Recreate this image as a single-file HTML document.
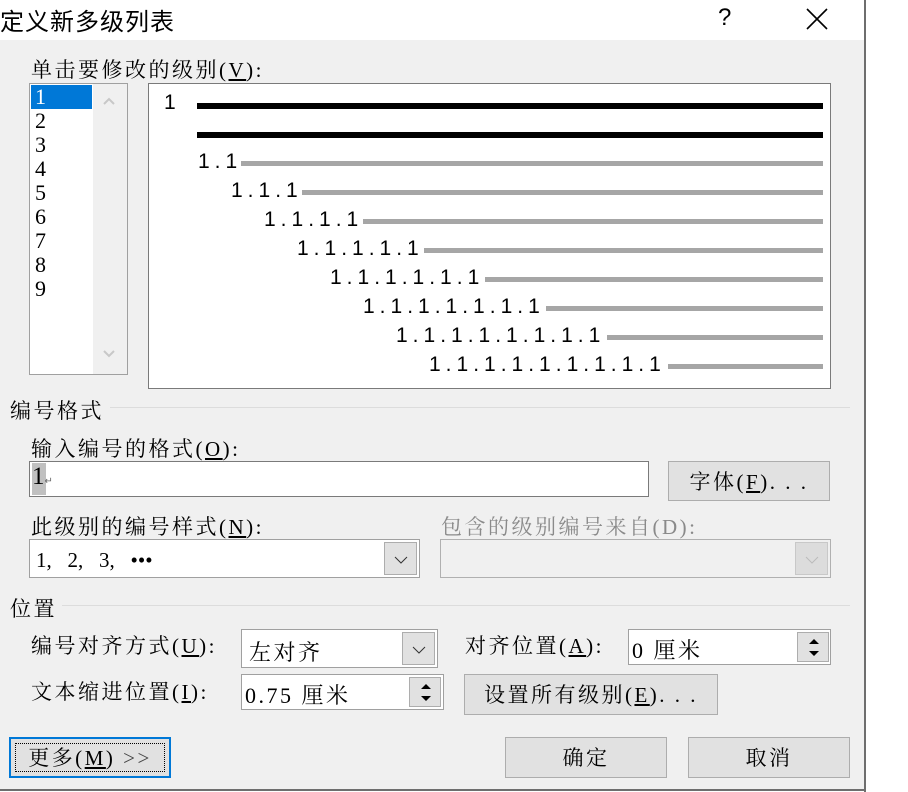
<!DOCTYPE html>
<html><head><meta charset="utf-8"><style>
*{margin:0;padding:0;box-sizing:border-box}
body{width:908px;height:792px;background:#fff;position:relative;overflow:hidden;font-family:"Liberation Serif","Noto Serif CJK SC",serif;font-size:21px;letter-spacing:2.5px;color:#000}
.a{position:absolute;white-space:nowrap}
.dlg{position:absolute;left:0;top:40px;width:864px;height:750px;background:#f0f0f0}
.vb{position:absolute;left:864px;top:0;width:2px;height:792px;background:#6e6e6e}
.hb{position:absolute;left:0;top:789px;width:866px;height:2px;background:#6e6e6e}
.btn{position:absolute;background:#e1e1e1;border:1px solid #adadad;text-align:center}
.box{position:absolute;background:#fff;border:1px solid #7a7a7a}
.dd{position:absolute;top:2px;right:2px;bottom:2px;width:33px;background:#e1e1e1;border:1px solid #adadad}
.bk{position:absolute;height:6px;background:#000}
.gr{position:absolute;height:5px;background:#a6a6a6}
.pl{position:absolute;font-family:"Liberation Sans",sans-serif;font-size:21px;letter-spacing:5px}
u{text-decoration:underline}
</style></head><body>
<div class="a" style="left:0;top:2px;font-family:'Liberation Sans','Noto Sans CJK SC',sans-serif;font-size:24px;letter-spacing:1px">定义新多级列表</div>
<div class="a" style="left:718px;top:4px;font-family:'Liberation Sans',sans-serif;font-size:24px">?</div>
<svg class="a" style="left:805px;top:7px" width="24" height="24"><path d="M2 2L22 22M22 2L2 22" stroke="#000" stroke-width="1.6"/></svg>
<div class="dlg"></div><div class="vb"></div><div class="hb"></div>

<div class="a" style="left:31px;top:54px">单击要修改的级别(<u>V</u>):</div>
<div class="box" style="left:29px;top:83px;width:99px;height:292px;border-color:#a0a0a0"></div>
<div class="a" style="left:93px;top:84px;width:34px;height:290px;background:#f0f0f0"></div>
<svg class="a" style="left:102px;top:96px" width="14" height="10"><path d="M2 8L7 3L12 8" stroke="#c8c8c8" stroke-width="2" fill="none"/></svg>
<svg class="a" style="left:102px;top:349px" width="14" height="10"><path d="M2 2L7 7L12 2" stroke="#c8c8c8" stroke-width="2" fill="none"/></svg>
<div class="a" style="left:31px;top:85px;width:61px;height:24px;background:#0078d7"></div>
<div class="a" style="left:35px;top:85px;line-height:24px;color:#fff;font-size:22px">1</div>
<div class="a" style="left:35px;top:109px;line-height:24px;font-size:22px">2<br>3<br>4<br>5<br>6<br>7<br>8<br>9</div>

<div class="box" style="left:148px;top:83px;width:683px;height:306px"></div>
<div class="pl" style="left:164px;top:91px">1</div>
<div class="bk" style="left:197px;top:103px;width:626px"></div>
<div class="bk" style="left:197px;top:132px;width:626px"></div>
<div class="pl" style="left:198px;top:150px">1.1</div><div class="gr" style="left:241px;top:161px;width:582px"></div>
<div class="pl" style="left:231px;top:179px">1.1.1</div><div class="gr" style="left:302px;top:190px;width:521px"></div>
<div class="pl" style="left:264px;top:208px">1.1.1.1</div><div class="gr" style="left:363px;top:219px;width:460px"></div>
<div class="pl" style="left:297px;top:237px">1.1.1.1.1</div><div class="gr" style="left:424px;top:248px;width:399px"></div>
<div class="pl" style="left:330px;top:266px">1.1.1.1.1.1</div><div class="gr" style="left:485px;top:277px;width:338px"></div>
<div class="pl" style="left:363px;top:295px">1.1.1.1.1.1.1</div><div class="gr" style="left:546px;top:306px;width:277px"></div>
<div class="pl" style="left:396px;top:324px">1.1.1.1.1.1.1.1</div><div class="gr" style="left:607px;top:335px;width:216px"></div>
<div class="pl" style="left:429px;top:353px">1.1.1.1.1.1.1.1.1</div><div class="gr" style="left:668px;top:364px;width:155px"></div>

<div class="a" style="left:10px;top:395px">编号格式</div>
<div class="a" style="left:110px;top:407px;width:740px;height:1px;background:#dcdcdc"></div>
<div class="a" style="left:31px;top:433px">输入编号的格式(<u>O</u>):</div>
<div class="box" style="left:29px;top:461px;width:620px;height:36px"></div>
<div class="a" style="left:32px;top:463px;width:14px;height:32px;background:#c0c0c0"></div>
<div class="a" style="left:32px;top:463px;font-size:25px;letter-spacing:0">1<span style="font-size:10px;color:#666">↵</span></div>
<div class="btn" style="left:668px;top:461px;width:162px;height:40px;line-height:40px">字体(<u>F</u>). . .</div>

<div class="a" style="left:31px;top:511px">此级别的编号样式(<u>N</u>):</div>
<div class="a" style="left:441px;top:511px;color:#8a8a8a">包含的级别编号来自(D):</div>
<div class="box" style="left:29px;top:539px;width:391px;height:39px;border-color:#a0a0a0"><div class="a" style="left:6px;top:8px;letter-spacing:0">1,&nbsp;&nbsp; 2,&nbsp;&nbsp; 3,&nbsp;&nbsp; •••</div><div class="dd"><svg style="position:absolute;left:9px;top:12px" width="14" height="10"><path d="M1 2L7 8L13 2" stroke="#333" fill="none"/></svg></div></div>
<div class="box" style="left:440px;top:539px;width:391px;height:39px;background:#f0f0f0;border-color:#b0b0b0"><div class="dd" style="background:#dcdcdc;border-color:#c8c8c8"><svg style="position:absolute;left:9px;top:12px" width="14" height="10"><path d="M1 2L7 8L13 2" stroke="#bbb" fill="none"/></svg></div></div>

<div class="a" style="left:10px;top:593px">位置</div>
<div class="a" style="left:62px;top:605px;width:788px;height:1px;background:#dcdcdc"></div>
<div class="a" style="left:31px;top:630px">编号对齐方式(<u>U</u>):</div>
<div class="box" style="left:241px;top:629px;width:197px;height:39px;border-color:#a0a0a0"><div class="a" style="left:7px;top:6px;font-size:22px">左对齐</div><div class="dd"><svg style="position:absolute;left:9px;top:12px" width="14" height="10"><path d="M1 2L7 8L13 2" stroke="#333" fill="none"/></svg></div></div>
<div class="a" style="left:465px;top:630px">对齐位置(<u>A</u>):</div>
<div class="box" style="left:628px;top:629px;width:203px;height:36px;border-color:#a0a0a0"><div class="a" style="left:3px;top:4px;font-size:22px">0 厘米</div>
<div class="a" style="left:168px;top:2px;width:32px;height:30px;background:#e1e1e1;border:1px solid #adadad"><svg style="position:absolute;left:9px;top:4px" width="14" height="22"><path d="M2 7L7 2L12 7Z M2 14L12 14L7 19Z" fill="#000"/></svg></div></div>
<div class="a" style="left:31px;top:676px">文本缩进位置(<u>I</u>):</div>
<div class="box" style="left:241px;top:674px;width:203px;height:36px;border-color:#a0a0a0"><div class="a" style="left:3px;top:4px;font-size:22px">0.75 厘米</div>
<div class="a" style="left:167px;top:2px;width:32px;height:30px;background:#e1e1e1;border:1px solid #adadad"><svg style="position:absolute;left:9px;top:4px" width="14" height="22"><path d="M2 7L7 2L12 7Z M2 14L12 14L7 19Z" fill="#000"/></svg></div></div>
<div class="btn" style="left:464px;top:674px;width:254px;height:41px;line-height:41px">设置所有级别(<u>E</u>). . .</div>

<div class="btn" style="left:9px;top:737px;width:162px;height:41px;border:2px solid #0078d7;line-height:39px"><div style="position:absolute;left:4px;top:4px;right:4px;bottom:4px;border:1px dotted #000"></div>更多(<u>M</u>) <span style="color:#444">&gt;&gt;</span></div>
<div class="btn" style="left:505px;top:737px;width:162px;height:41px;line-height:41px">确定</div>
<div class="btn" style="left:688px;top:737px;width:162px;height:41px;line-height:41px">取消</div>
</body></html>
